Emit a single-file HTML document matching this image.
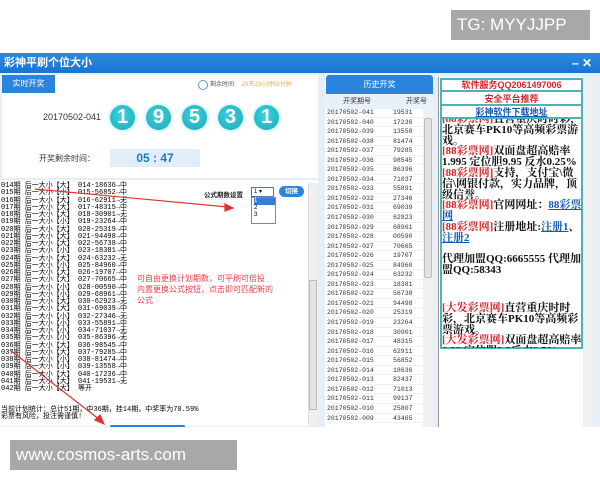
<!DOCTYPE html>
<html><head><meta charset="utf-8"><style>
*{margin:0;padding:0;box-sizing:border-box}
body{width:600px;height:480px;background:#fff;position:relative;overflow:hidden;font-family:"Liberation Sans","Noto Sans CJK SC",sans-serif}
.a{position:absolute}
.log div{height:7.25px;line-height:7.25px;font-size:7px;white-space:nowrap;font-family:"Liberation Mono","Noto Sans CJK SC",monospace}
.hist div{height:9.56px;line-height:9.56px;font-size:6.5px;white-space:nowrap;font-family:"Liberation Mono",monospace;color:#333;border-bottom:1px solid #f2f2f2}
.hist span{display:inline-block}
.ball{position:absolute;top:105px;width:25px;height:25px;border-radius:50%;background:radial-gradient(circle at 45% 40%,#3fd0dc,#17aabd);color:#fff;font-weight:bold;font-size:20px;text-align:center;line-height:25px;box-shadow:0 0 4px #9ee6ee}
.r{color:#d9262b}
.lk{color:#1559b7;text-decoration:underline}
</style></head><body>
<div class="a" style="top:10px;width:139px;height:30px;background:#a8a8a8;color:#fff;font-size:17px;line-height:30px;padding-left:6px;left:451px">TG: MYYJJPP</div>
<div class="a" style="left:0;top:53px;width:600px;height:374px;background:#e6eef7"></div>
<div class="a" style="left:0;top:53px;width:600px;height:20px;background:linear-gradient(#2d8ae0,#1a74d2);color:#fff;font-size:11px;font-weight:bold;line-height:20px;padding-left:4px">彩神平刷个位大小</div>
<div class="a" style="right:8px;top:53px;color:#fff;font-size:12px;font-weight:bold;line-height:20px">– ✕</div>
<div class="a" style="left:2px;top:75px;width:316px;height:103px;background:#fff"></div>
<div class="a" style="left:2px;top:75px;width:53px;height:18px;background:#2a84dc;color:#fff;font-size:8px;text-align:center;line-height:18px">实时开奖</div>
<div class="a" style="left:198px;top:80px;width:10px;height:10px;border:1px solid #6a8fb8;border-radius:50%"></div>
<div class="a" style="left:210px;top:80px;font-size:6px;color:#555;line-height:10px">剩余时间 <span style="color:#f0b030;margin-left:6px">29天23小时59分钟</span></div>
<div class="a" style="left:43px;top:112px;font-size:9px;color:#333">20170502-041</div>
<div class="ball" style="left:110px">1</div>
<div class="ball" style="left:146px">9</div>
<div class="ball" style="left:182px">5</div>
<div class="ball" style="left:218px">3</div>
<div class="ball" style="left:254px">1</div>
<div class="a" style="left:39px;top:153px;font-size:8px;color:#333">开奖剩余时间：</div>
<div class="a" style="left:110px;top:149px;width:90px;height:18px;background:#e1edf9;color:#1f78c8;font-weight:bold;font-size:12px;text-align:center;line-height:18px">05 : 47</div>
<div class="a" style="left:0;top:180px;width:318px;height:246px;background:#fff"></div>
<div class="a" style="left:308px;top:183px;width:10px;height:243px;background:#f0f0f0;border-left:1px solid #ddd"></div>
<div class="a" style="left:309px;top:280px;width:8px;height:130px;background:#e4e4e4;border:1px solid #bbb"></div>
<div class="a log" style="left:1px;top:183px">
<div>014期 后一大小【大】 014-18636→中</div><div>015期 后一大小【小】 015-56852→中</div><div>016期 后一大小【大】 016-62911→无</div><div>017期 后一大小【大】 017-48315→中</div><div>018期 后一大小【大】 018-30901→无</div><div>019期 后一大小【小】 019-23264→中</div><div>020期 后一大小【大】 020-25319→中</div><div>021期 后一大小【大】 021-94498→中</div><div>022期 后一大小【大】 022-56738→中</div><div>023期 后一大小【小】 023-18381→中</div><div>024期 后一大小【大】 024-63232→无</div><div>025期 后一大小【小】 025-84960→中</div><div>026期 后一大小【大】 026-19707→中</div><div>027期 后一大小【大】 027-70665→中</div><div>028期 后一大小【小】 028-00590→中</div><div>029期 后一大小【小】 029-68961→中</div><div>030期 后一大小【大】 030-62923→无</div><div>031期 后一大小【大】 031-69039→中</div><div>032期 后一大小【小】 032-27346→无</div><div>033期 后一大小【小】 033-55891→中</div><div>034期 后一大小【小】 034-71037→无</div><div>035期 后一大小【小】 035-86396→无</div><div>036期 后一大小【大】 036-98545→中</div><div>037期 后一大小【大】 037-79285→中</div><div>038期 后一大小【小】 038-81474→中</div><div>039期 后一大小【小】 039-13558→中</div><div>040期 后一大小【大】 040-17236→中</div><div>041期 后一大小【大】 041-19531→无</div><div>042期 后一大小【大】 等开</div>
</div>
<div class="a log" style="left:1px;top:407px"><div>当前计划统计：总计51期，中36期，挂14期，中奖率为70.59%</div><div>彩票有风险，投注需谨慎!</div></div>
<div class="a" style="left:204px;top:189px;font-size:6.5px;font-weight:bold;color:#222">公式期数设置</div>
<div class="a" style="left:251px;top:187px;width:23px;height:10px;border:1px solid #4a7ab0;background:#fff;font-size:6px;line-height:8px;padding-left:2px">1 ▾</div>
<div class="a" style="left:251px;top:197px;width:25px;height:27px;border:1px solid #888;background:#fff;font-size:6px;line-height:7px;padding-left:2px"><div style="background:#3a7bd5;color:#fff">1</div>2<br>3</div>
<div class="a" style="left:279px;top:186px;width:25px;height:11px;border-radius:6px;background:#2a84dc;color:#fff;font-size:6.5px;text-align:center;line-height:11px;font-weight:bold">切换</div>
<div class="a" style="left:137px;top:273px;font-size:8px;line-height:11px;color:#e0444a">可自由更换计划期数，可平刷可倍投<br>内置更换公式按钮，点击即可匹配新的<br>公式</div>
<svg class="a" style="left:0;top:180px" width="320" height="250"><g stroke="#d33" stroke-width="1.2" fill="#d33"><line x1="35" y1="9" x2="228" y2="27"/><polygon points="233,28 225,24 225,31"/><line x1="10" y1="170" x2="100" y2="240"/><polygon points="104,244 95,240 100,235"/></g></svg>
<div class="a" style="left:110px;top:425px;width:75px;height:3px;background:#2a84dc;border-radius:3px"></div>
<div class="a" style="left:325px;top:75px;width:108px;height:352px;background:#fff"></div>
<div class="a" style="left:326px;top:75px;width:107px;height:19px;background:#2a84dc;color:#fff;font-size:8px;text-align:center;line-height:19px;border-radius:3px 3px 0 0">历史开奖</div>
<div class="a" style="left:325px;top:94px;width:108px;height:15px;background:#e8f0f8;font-size:7px;line-height:15px;color:#333"><span style="position:absolute;left:18px">开奖期号</span><span style="position:absolute;left:81px">开奖号</span></div>
<div class="a hist" style="left:327px;top:108px;width:96px">
<div><span style="width:66px">20170502-041</span>19531</div><div><span style="width:66px">20170502-040</span>17236</div><div><span style="width:66px">20170502-039</span>13558</div><div><span style="width:66px">20170502-038</span>81474</div><div><span style="width:66px">20170502-037</span>79285</div><div><span style="width:66px">20170502-036</span>98545</div><div><span style="width:66px">20170502-035</span>86396</div><div><span style="width:66px">20170502-034</span>71037</div><div><span style="width:66px">20170502-033</span>55891</div><div><span style="width:66px">20170502-032</span>27346</div><div><span style="width:66px">20170502-031</span>69039</div><div><span style="width:66px">20170502-030</span>62923</div><div><span style="width:66px">20170502-029</span>68961</div><div><span style="width:66px">20170502-028</span>00590</div><div><span style="width:66px">20170502-027</span>70665</div><div><span style="width:66px">20170502-026</span>19707</div><div><span style="width:66px">20170502-025</span>84960</div><div><span style="width:66px">20170502-024</span>63232</div><div><span style="width:66px">20170502-023</span>18381</div><div><span style="width:66px">20170502-022</span>56738</div><div><span style="width:66px">20170502-021</span>94498</div><div><span style="width:66px">20170502-020</span>25319</div><div><span style="width:66px">20170502-019</span>23264</div><div><span style="width:66px">20170502-018</span>30901</div><div><span style="width:66px">20170502-017</span>48315</div><div><span style="width:66px">20170502-016</span>62911</div><div><span style="width:66px">20170502-015</span>56852</div><div><span style="width:66px">20170502-014</span>18636</div><div><span style="width:66px">20170502-013</span>82437</div><div><span style="width:66px">20170502-012</span>71013</div><div><span style="width:66px">20170502-011</span>99137</div><div><span style="width:66px">20170502-010</span>25807</div><div><span style="width:66px">20170502-009</span>43465</div>
</div>
<div class="a" style="left:423px;top:108px;width:10px;height:319px;background:#f0f0f0"></div>
<div class="a" style="left:424px;top:118px;width:8px;height:160px;background:#e2e2e2;border:1px solid #bbb;border-radius:2px"></div>
<div class="a" style="left:438px;top:77px;width:155px;height:350px;background:#fff;border-left:1px solid #999"></div>
<div class="a" style="left:583px;top:77px;width:10px;height:350px;background:#f0f0f0"></div>
<div class="a" style="left:440px;top:78px;width:143px;height:271px;border:2px solid #4cb4b4"></div>
<div class="a" style="left:441px;top:79px;width:141px;height:13px;border-bottom:2px solid #4cb4b4;color:#d9262b;font-weight:bold;font-size:9px;text-align:center;line-height:13px">软件服务QQ2061497006</div>
<div class="a" style="left:441px;top:93px;width:141px;height:13px;border-bottom:2px solid #4cb4b4;color:#d9262b;font-weight:bold;font-size:9px;text-align:center;line-height:13px">安全平台推荐</div>
<div class="a" style="left:441px;top:106px;width:141px;height:13px;border-bottom:2px solid #4cb4b4;color:#1559b7;font-weight:bold;font-size:9px;text-align:center;line-height:13px;text-decoration:underline">彩神软件下载地址</div>
<div class="a" style="left:442px;top:119px;width:140px;height:229px;overflow:hidden;font-size:11px;line-height:10.8px;font-weight:bold;color:#111;font-family:'Liberation Serif','Noto Serif CJK SC',serif">
<div style="margin-top:-5px"><span class="r">[88彩票网]</span>直营重庆时时彩，北京赛车PK10等高频彩票游戏。</div>
<div><span class="r">[88彩票网]</span>双面盘超高赔率1.995 定位胆9.95 反水0.25%</div>
<div><span class="r">[88彩票网]</span>支持，支付宝\微信\网银付款，实力品牌，顶级信誉。</div>
<div><span class="r">[88彩票网]</span>官网网址：<span class="lk">88彩票网</span></div>
<div><span class="r">[88彩票网]</span>注册地址:<span class="lk">注册1</span>、<span class="lk">注册2</span></div>
<div style="height:10.8px"></div>
<div>代理加盟QQ:6665555 代理加盟QQ:58343</div>
<div style="height:27px"></div>
<div><span class="r">[大发彩票网]</span>直营重庆时时彩，北京赛车PK10等高频彩票游戏。</div>
<div><span class="r">[大发彩票网]</span>双面盘超高赔率1.99 定位胆9.9反水0.5%</div>
</div>
<div class="a" style="left:0;top:427px;width:600px;height:53px;background:#fff"></div>
<div class="a" style="left:10px;top:440px;width:227px;height:30px;background:#a8a8a8;color:#fff;font-size:17px;line-height:30px;padding-left:6px">www.cosmos-arts.com</div>
</body></html>
